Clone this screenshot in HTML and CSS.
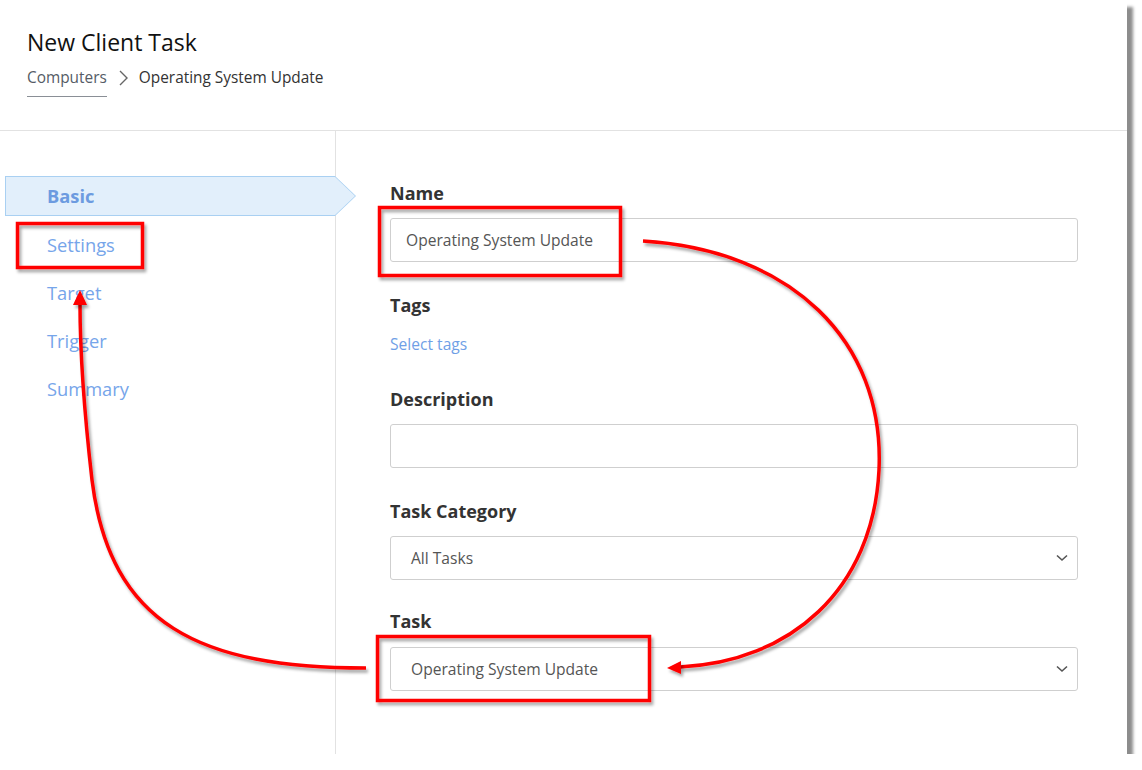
FILE: index.html
```html
<!DOCTYPE html>
<html lang="en">
  <head>
    <meta charset="UTF-8">
    <title>New Client Task</title>
    <link rel="stylesheet" href="styles.css">
  </head>
  <body>
    <div class="frame">
      <div class="header">
        <h1>New Client Task</h1>
        <div class="crumbs">
          <span class="crumb-link">Computers</span>
          <svg class="crumb-sep" width="14" height="18" viewBox="0 0 14 18">
            <path d="M3 2 L10 9 L3 16" fill="none" stroke="#666" stroke-width="1.4"/>
          </svg>
          <span class="crumb-current">Operating System Update</span>
        </div>
      </div>

      <div class="main">
        <ul class="steps">
          <li class="step active">Basic</li>
          <li class="step">Settings</li>
          <li class="step">Target</li>
          <li class="step">Trigger</li>
          <li class="step">Summary</li>
        </ul>

        <div class="form">
          <div class="field">
            <div class="label">Name</div>
            <div class="input">Operating System Update</div>
          </div>

          <div class="field tight">
            <div class="label">Tags</div>
            <div class="link">Select tags</div>
          </div>

          <div class="field">
            <div class="label">Description</div>
            <div class="input"></div>
          </div>

          <div class="field tight">
            <div class="label">Task Category</div>
            <div class="input select">
              <span>All Tasks</span>
              <svg width="12" height="8" viewBox="0 0 12 8"><path d="M1 1.5 L6 6 L11 1.5" fill="none" stroke="#555" stroke-width="1.6"/></svg>
            </div>
          </div>

          <div class="field">
            <div class="label last">Task</div>
            <div class="input select">
              <span>Operating System Update</span>
              <svg width="12" height="8" viewBox="0 0 12 8"><path d="M1 1.5 L6 6 L11 1.5" fill="none" stroke="#555" stroke-width="1.6"/></svg>
            </div>
          </div>
        </div>
      </div>

      <svg class="marks" width="1142" height="770" viewBox="0 0 1142 770">
        <defs>
          <filter id="shade" x="-10%" y="-10%" width="130%" height="130%">
            <feDropShadow dx="2" dy="3" stdDeviation="1.6" flood-color="#000" flood-opacity="0.35"/>
          </filter>
        </defs>
        <g filter="url(#shade)" fill="none" stroke="#f00" stroke-width="3.5">
          <rect x="17.5" y="223.5" width="125" height="44"/>
          <rect x="379.5" y="207.5" width="241" height="68"/>
          <rect x="377.5" y="636.5" width="272" height="64"/>
          <path d="M643 241 C 790 250, 885 340, 879 470 C 873 590, 790 662, 680 667"/>
          <path d="M366 668 C 200 668, 110 625, 92 480 C 84 410, 80 350, 80 304"/>
        </g>
        <g filter="url(#shade)" fill="#f00">
          <polygon points="667,668 681,661 681,674"/>
          <polygon points="80,290 73,305 87,305"/>
        </g>
      </svg>
    </div>
  </body>
</html>
```

FILE: styles.css
```css
* {
  margin: 0;
  padding: 0;
  box-sizing: border-box;
}

body {
  background: #ffffff;
  font-family: "Open Sans", "Noto Sans", sans-serif;
  color: #333333;
}

.frame {
  position: relative;
  width: 1127px;
  height: 754px;
  background: #ffffff;
  box-shadow: 6px 7px 3px rgba(0, 0, 0, 0.45);
  display: flex;
  flex-direction: column;
}

.header {
  height: 131px;
  padding: 27px 0 0 27px;
  border-bottom: 1px solid #e2e2e2;
}

.header h1 {
  font-size: 23px;
  font-weight: 400;
  color: #111111;
  line-height: 30px;
}

.crumbs {
  display: flex;
  align-items: center;
  margin-top: 2px;
  font-size: 15.4px;
  line-height: 22px;
}

.crumb-link {
  color: #555c66;
  padding-bottom: 7px;
  border-bottom: 1px solid #8a8f96;
  margin-top: 8px;
}

.crumb-sep {
  margin: 0 8px 0 10px;
}

.crumb-current {
  color: #333333;
}

.main {
  flex-grow: 1;
  display: flex;
}

.steps {
  width: 335px;
  flex-shrink: 0;
  list-style: none;
  padding-top: 41px;
}

.step {
  height: 48px;
  line-height: 48px;
  padding-left: 47px;
  font-size: 18.3px;
  color: #76a5ea;
}

.step.active {
  position: relative;
  z-index: 1;
  height: 40px;
  line-height: 40px;
  margin: 4px 0 5px 5px;
  width: 351px;
  padding-left: 42px;
  font-weight: 700;
  color: #6c9be0;
  background: #a9d0f2;
  clip-path: polygon(0 0, 330px 0, 351px 50%, 330px 100%, 0 100%);
}

.step.active::before {
  content: "";
  position: absolute;
  inset: 1px;
  z-index: -1;
  background: #e2effb;
  clip-path: polygon(0 0, 329px 0, 349px 50%, 329px 100%, 0 100%);
}

.form {
  flex-grow: 1;
  border-left: 1px solid #e2e2e2;
  padding: 50px 49px 0 54px;
}

.field {
  margin-bottom: 31px;
}

.field.tight {
  margin-bottom: 29px;
}

.label {
  font-size: 18px;
  font-weight: 700;
  line-height: 24px;
  color: #333333;
  margin-bottom: 13px;
}

.label.last {
  margin-bottom: 14px;
}

.input {
  height: 44px;
  border: 1px solid #cfcfcf;
  border-radius: 3px;
  padding-left: 15px;
  display: flex;
  align-items: center;
  font-size: 15.6px;
  color: #555555;
}

.select {
  padding: 0 9px 0 20px;
  justify-content: space-between;
}

.link {
  font-size: 15.6px;
  line-height: 28px;
  color: #6f9fe6;
}

.marks {
  position: absolute;
  left: 0;
  top: 0;
  pointer-events: none;
}
```
